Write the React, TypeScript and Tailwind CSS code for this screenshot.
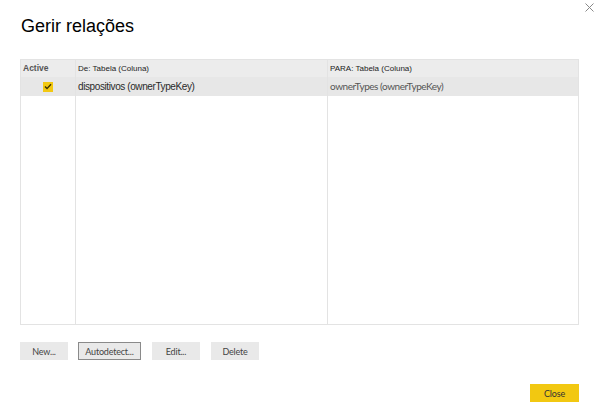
const cols = [
  { key: 'active', width: 'w-[55px]' },
  { key: 'from', width: 'w-[252px]' },
  { key: 'to', width: 'flex-1' },
];

function CheckBox() {
  return (
    <span className="flex h-[10px] w-[10px] items-center justify-center bg-[#f2c811]">
      <svg width="8" height="7" viewBox="0 0 8 7" fill="none">
        <path d="M1 3.6 L3 5.6 L7 1.2" stroke="#3a3000" strokeWidth="1.4" />
      </svg>
    </span>
  );
}

function Button({ label, focused }: { label: string; focused?: boolean }) {
  return (
    <button
      className={`h-[18px] bg-[#e9e9e9] px-0 text-[9px] leading-none tracking-[-0.2px] text-[#444] font-['Lato',sans-serif] ${
        focused ? 'w-[63px] border border-[#8a8a8a]' : 'w-[48px]'
      }`}
    >
      {label}
    </button>
  );
}

export default function App() {
  return (
    <div className="relative h-[409px] w-[600px] bg-white font-['Liberation_Sans',Arial,sans-serif]">
      <button className="absolute right-[6px] top-[3px] text-[#888]">
        <svg width="9" height="9" viewBox="0 0 9 9" stroke="currentColor" strokeWidth="1">
          <path d="M0.5 0.5 L8.5 8.5 M8.5 0.5 L0.5 8.5" />
        </svg>
      </button>

      <div className="px-[20px] pt-[17px]">
        <h1 className="pl-[1px] text-[18px] leading-none text-black">Gerir relações</h1>

        <div className="mt-[24px] mr-[1px] flex h-[266px] border border-[#e3e3e3]">
          {/* Active */}
          <div className={`${cols[0].width} flex flex-col border-r border-[#e3e3e3]`}>
            <div className="flex h-[17px] items-center bg-[#ececec] pl-[2px] text-[8.5px] font-bold text-[#555]">
              Active
            </div>
            <div className="flex h-[19px] items-center justify-center bg-[#e7e7e7] pr-[1px]">
              <CheckBox />
            </div>
          </div>
          {/* De */}
          <div className={`${cols[1].width} flex flex-col border-r border-[#e3e3e3]`}>
            <div className="flex h-[17px] items-center bg-[#ececec] pl-[2px] text-[8px] text-[#222]">
              De: Tabela (Coluna)
            </div>
            <div className="flex h-[19px] items-center bg-[#e7e7e7] pl-[2px] text-[10px] tracking-[-0.4px] text-[#2a2a2a]">
              dispositivos (ownerTypeKey)
            </div>
          </div>
          {/* Para */}
          <div className={`${cols[2].width} flex flex-col`}>
            <div className="flex h-[17px] items-center bg-[#ececec] pl-[2px] text-[8px] text-[#222]">
              PARA: Tabela (Coluna)
            </div>
            <div className="flex h-[19px] items-center bg-[#e7e7e7] pl-[2px] text-[10px] tracking-[-0.45px] text-[#555] font-['Lato',sans-serif]">
              ownerTypes (ownerTypeKey)
            </div>
          </div>
        </div>

        <div className="mt-[17px] flex gap-[10px]">
          <Button label="New..." />
          <Button label="Autodetect..." focused />
          <div className="ml-[1px] flex gap-[11px]">
            <Button label="Edit..." />
            <Button label="Delete" />
          </div>
        </div>

        <div className="mt-[24px] mr-[1px] flex justify-end">
          <button className="h-[18px] w-[49px] bg-[#f2c811] text-[9px] leading-none tracking-[-0.2px] text-[#333] font-['Lato',sans-serif]">
            Close
          </button>
        </div>
      </div>
    </div>
  );
}
